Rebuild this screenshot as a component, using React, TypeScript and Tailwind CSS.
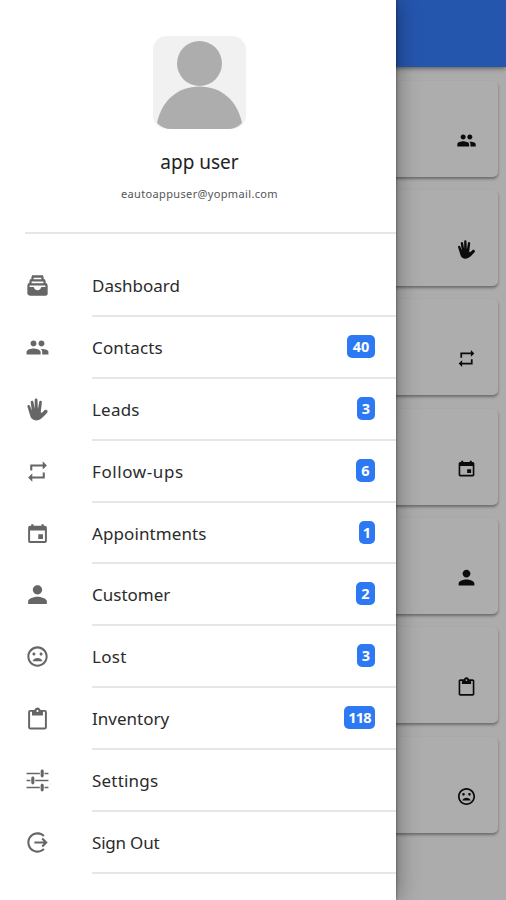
import type { IconType } from "react-icons";
import {
  IoMdCalendar,
  IoMdClipboard,
  IoMdFiling,
  IoMdHand,
  IoMdLogOut,
  IoMdOptions,
  IoMdPeople,
  IoMdPerson,
  IoMdRepeat,
  IoMdSad,
} from "react-icons/io";

type MenuItem = {
  label: string;
  icon: IconType;
  tracking: string;
  count?: number;
  badge?: string;
};

const menuItems: MenuItem[] = [
  { label: "Dashboard", icon: IoMdFiling, tracking: "tracking-[0px]" },
  { label: "Contacts", icon: IoMdPeople, tracking: "tracking-[0.15px]", count: 40, badge: "w-7" },
  { label: "Leads", icon: IoMdHand, tracking: "tracking-[0.2px]", count: 3, badge: "w-[18px]" },
  { label: "Follow-ups", icon: IoMdRepeat, tracking: "tracking-[0.6px]", count: 6, badge: "w-[19px]" },
  { label: "Appointments", icon: IoMdCalendar, tracking: "tracking-[0.1px]", count: 1, badge: "w-4" },
  { label: "Customer", icon: IoMdPerson, tracking: "tracking-[0px]", count: 2, badge: "w-[19px]" },
  { label: "Lost", icon: IoMdSad, tracking: "tracking-[0.3px]", count: 3, badge: "w-[18px]" },
  {
    label: "Inventory",
    icon: IoMdClipboard,
    tracking: "tracking-[0px]",
    count: 118,
    badge: "w-[31px] tracking-[-0.8px]",
  },
  { label: "Settings", icon: IoMdOptions, tracking: "tracking-[0.2px]" },
  { label: "Sign Out", icon: IoMdLogOut, tracking: "tracking-[-0.2px]" },
];

const cardIcons: IconType[] = [
  IoMdPeople,
  IoMdHand,
  IoMdRepeat,
  IoMdCalendar,
  IoMdPerson,
  IoMdClipboard,
  IoMdSad,
];

function Avatar() {
  return (
    <svg className="mt-9 h-[93px] w-[93px] rounded-[14px] bg-[#f1f1f1]" viewBox="0 0 93 93">
      <circle cx="46.5" cy="27.5" r="22.5" fill="#adadad" />
      <path d="M4 87C9 64 25 50.5 46.5 50.5S84 64 89 87Q83 93 75 93H18Q10 93 4 87Z" fill="#adadad" />
    </svg>
  );
}

function MenuRow({ label, icon: Icon, tracking, count, badge }: MenuItem) {
  return (
    <li className="flex h-[61.9px] items-center pl-[25px]">
      <Icon className="mb-px h-[25px] w-[25px] shrink-0 text-[#666666]" />
      <div className="ml-[42px] flex h-full flex-1 items-center justify-between border-b-2 border-[#e6e6e6] pr-[21px]">
        <span className={`pt-0.5 text-[17px] leading-6 text-[#2b2b2b] ${tracking}`}>{label}</span>
        {count !== undefined && (
          <span
            className={`mb-px rounded-[5px] bg-[#2c79f3] text-center text-[14.5px] leading-[23px] font-bold text-white ${badge}`}
          >
            {count}
          </span>
        )}
      </div>
    </li>
  );
}

export default function App() {
  return (
    <div className="relative h-[900px] w-[506px] overflow-hidden bg-[#acacac] font-['Noto_Sans',sans-serif]">
      {/* page behind the menu */}
      <header className="relative h-[67px] bg-[#2556ae] shadow-[0_1px_5px_rgba(0,0,0,0.55)]" />
      <main className="flex flex-col gap-[13.4px] pt-[13.5px] pr-2">
        {cardIcons.map((Icon, index) => (
          <div
            key={index}
            className="flex h-24 justify-end rounded-[5px] bg-[#adadad] pt-[49px] pr-[21.5px] shadow-[0_2px_3px_rgba(0,0,0,0.38)]"
          >
            <Icon className="h-[21px] w-[21px] text-[#0b0b0b]" />
          </div>
        ))}
      </main>

      {/* side menu */}
      <aside className="absolute inset-y-0 left-0 w-[396px] bg-white shadow-[0_0_22px_rgba(0,0,0,0.42),0_0_3px_rgba(0,0,0,0.45)]">
        <div className="ml-[25px] flex h-[234px] flex-col items-center border-b-2 border-[#e6e6e6] pr-[22px]">
          <Avatar />
          <h1 className="mt-[21px] text-[19px] leading-6 text-[#222222]">app user</h1>
          <p className="mt-3 text-[11px] leading-4 tracking-[0.35px] text-[#555555]">
            eautoappuser@yopmail.com
          </p>
        </div>
        <ul className="pt-[21px]">
          {menuItems.map((item) => (
            <MenuRow key={item.label} {...item} />
          ))}
        </ul>
      </aside>
    </div>
  );
}
